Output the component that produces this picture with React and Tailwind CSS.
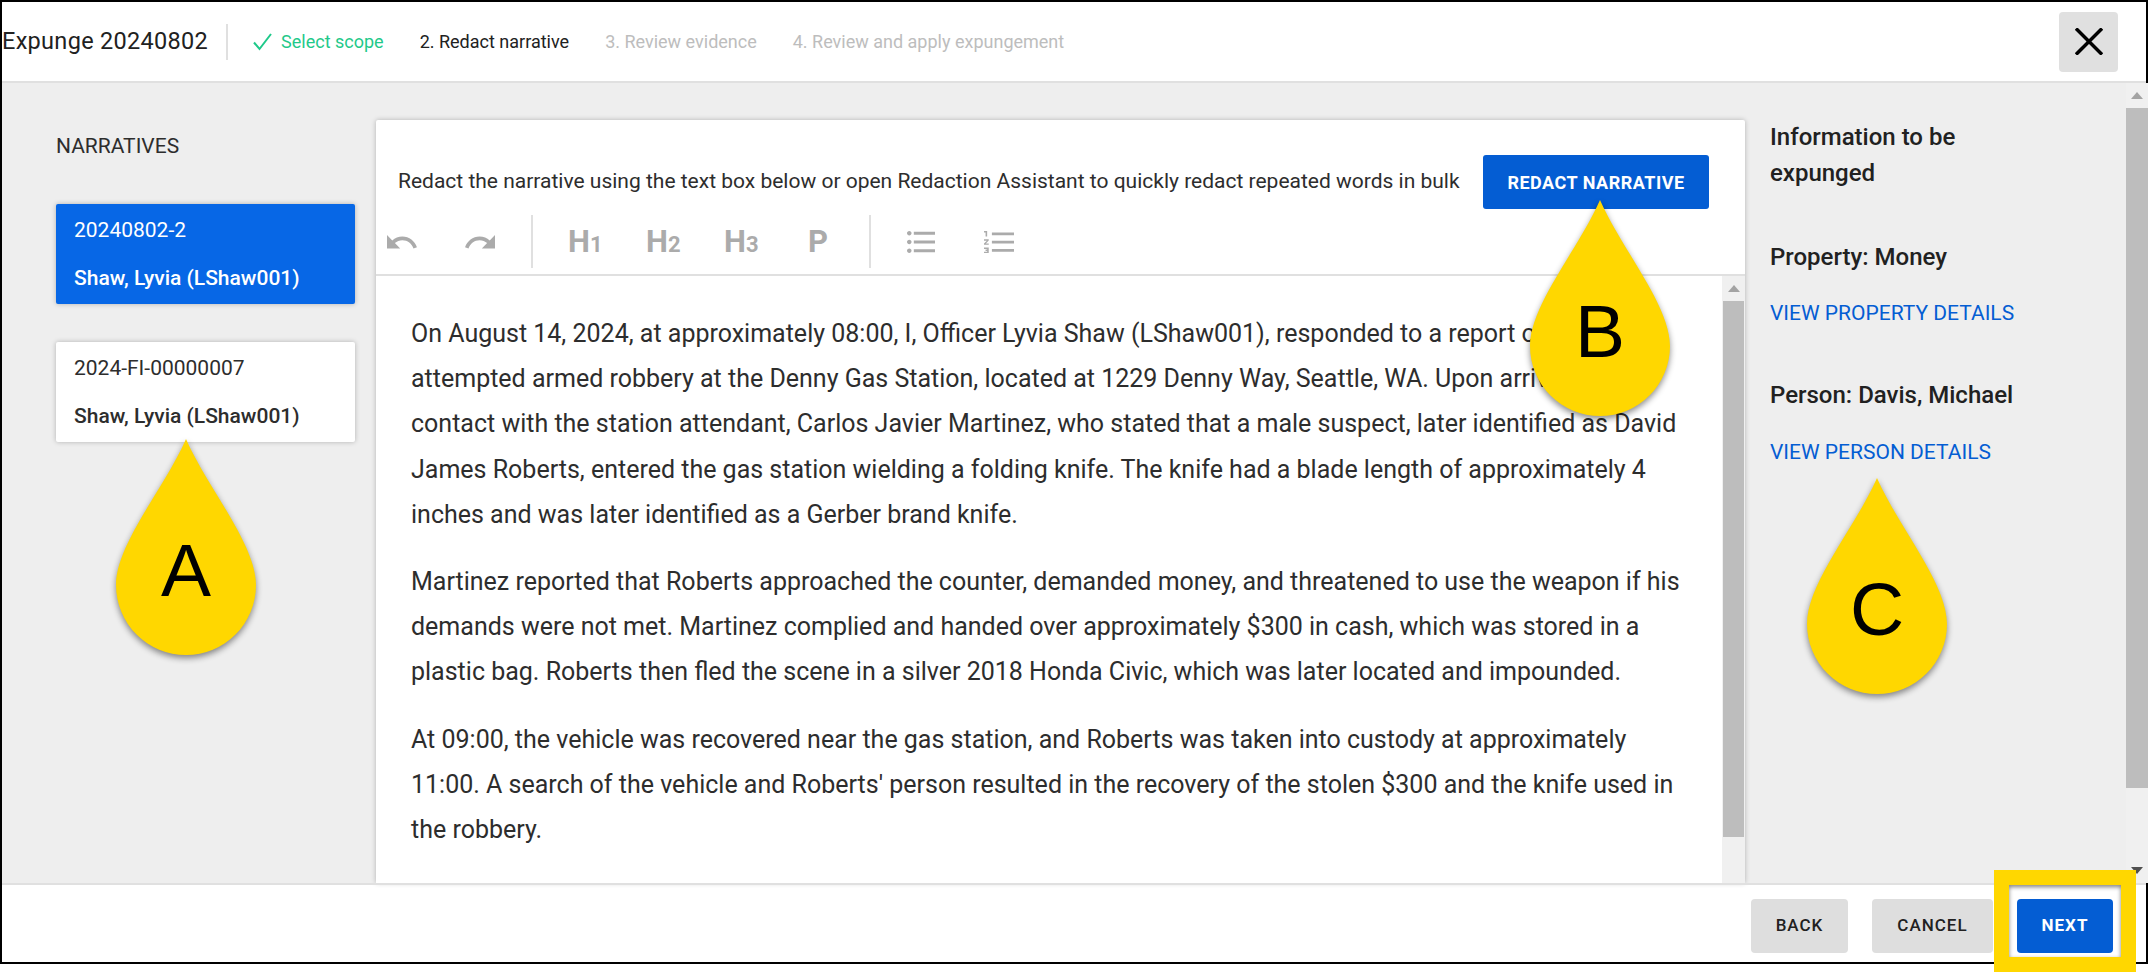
const narrative = [
  'On August 14, 2024, at approximately 08:00, I, Officer Lyvia Shaw (LShaw001), responded to a report of an attempted armed robbery at the Denny Gas Station, located at 1229 Denny Way, Seattle, WA. Upon arrival, I made contact with the station attendant, Carlos Javier Martinez, who stated that a male suspect, later identified as David James Roberts, entered the gas station wielding a folding knife. The knife had a blade length of approximately 4 inches and was later identified as a Gerber brand knife.',
  'Martinez reported that Roberts approached the counter, demanded money, and threatened to use the weapon if his demands were not met. Martinez complied and handed over approximately $300 in cash, which was stored in a plastic bag. Roberts then fled the scene in a silver 2018 Honda Civic, which was later located and impounded.',
  "At 09:00, the vehicle was recovered near the gas station, and Roberts was taken into custody at approximately 11:00. A search of the vehicle and Roberts' person resulted in the recovery of the stolen $300 and the knife used in the robbery.",
];

function Pin({ letter, className }) {
  return (
    <div className={`absolute w-[140px] h-[216px] drop-shadow-[0_3px_3px_rgba(0,0,0,0.45)] ${className}`}>
      <svg viewBox="0 0 140 216" className="w-full h-full">
        <path d="M70 0C92 50 140 105 140 146A70 70 0 0 1 0 146C0 105 48 50 70 0Z" fill="#ffd700" />
      </svg>
      <span className="absolute left-0 right-0 top-[93px] text-center text-[75px] leading-[76px] text-black font-['Liberation_Sans']">{letter}</span>
    </div>
  );
}

function UndoIcon({ flip }) {
  return (
    <svg viewBox="2 7 20.5 9.3" preserveAspectRatio="none" className={`w-[30px] h-[14px] ${flip ? '-scale-x-100' : ''}`} fill="#ababab">
      <path d="M12.5 8c-2.65 0-5.05.99-6.9 2.6L2 7v9h9l-3.62-3.62c1.39-1.16 3.16-1.88 5.12-1.88 3.54 0 6.55 2.31 7.6 5.5l2.37-.78C21.08 11.03 17.15 8 12.5 8z" />
    </svg>
  );
}

function Heading({ n }) {
  return (
    <span className="font-bold text-[#ababab] text-[31px] leading-none w-[78px] shrink-0">
      H<span className="text-[22px]">{n}</span>
    </span>
  );
}

function BulletIcon() {
  return (
    <svg viewBox="2.5 4.5 18.5 15" preserveAspectRatio="none" className="w-[28px] h-[22px]" fill="#ababab">
      <path d="M4 10.5c-.83 0-1.5.67-1.5 1.5s.67 1.5 1.5 1.5 1.5-.67 1.5-1.5-.67-1.5-1.5-1.5zm0-6c-.83 0-1.5.67-1.5 1.5S3.17 7.5 4 7.5 5.5 6.83 5.5 6 4.83 4.5 4 4.5zm0 12c-.83 0-1.5.68-1.5 1.5s.68 1.5 1.5 1.5 1.5-.68 1.5-1.5-.67-1.5-1.5-1.5zM7 19h14v-2H7v2zm0-6h14v-2H7v2zm0-8v2h14V5H7z" />
    </svg>
  );
}

function NumberIcon() {
  return (
    <svg viewBox="2 4 19 16" preserveAspectRatio="none" className="w-[30px] h-[22px]" fill="#ababab">
      <path d="M2 17h2v.5H3v1h1v.5H2v1h3v-4H2zm1-9h1V4H2v1h1v3zm-1 3h1.8L2 13.1v.9h3v-1H3.2L5 10.9V10H2v1zm5-6v2h14V5H7zm0 14h14v-2H7v2zm0-6h14v-2H7v2z" />
    </svg>
  );
}

function Scrollbar({ thumbClass, trackClass, children }) {
  return (
    <div className={`flex flex-col shrink-0 ${trackClass}`}>
      <div className="h-[25px] flex items-center justify-center shrink-0">
        <div className="w-0 h-0 border-x-[6px] border-x-transparent border-b-[7px] border-b-[#a3a3a3]"></div>
      </div>
      <div className={`w-full bg-[#bdbdbd] shrink-0 ${thumbClass}`}></div>
      {children}
    </div>
  );
}

export default function App() {
  return (
    <div className="relative w-[2148px] h-[972px] overflow-hidden bg-white font-['Roboto',sans-serif] text-[#212121]">
      <div className="flex flex-col h-[964px] border-2 border-black bg-white">
        {/* header */}
        <div className="flex items-center h-[81px] shrink-0 border-b-2 border-[#e0e0e0] pr-[28px]">
          <span className="text-[23.5px] leading-none tracking-[0.3px] whitespace-nowrap">Expunge 20240802</span>
          <div className="w-[2px] h-9 bg-[#e0e0e0] ml-[18px] mr-[25px]"></div>
          <svg viewBox="0 0 19 19" className="w-[19px] h-[19px] mr-[9px]" fill="none" stroke="#1fc98a" strokeWidth="2">
            <path d="M1 10.5 6.5 17 18 2" />
          </svg>
          <span className="text-[18px] text-[#1fc98a]">Select scope</span>
          <span className="text-[18px] ml-9">2. Redact narrative</span>
          <span className="text-[18px] ml-9 text-[#bdbdbd]">3. Review evidence</span>
          <span className="text-[18px] ml-9 text-[#bdbdbd]">4. Review and apply expungement</span>
          <button className="ml-auto w-[59px] h-[60px] rounded bg-[#e0e0e0] flex items-center justify-center">
            <svg viewBox="0 0 28 27" className="w-[28px] h-[27px]" fill="none" stroke="#000" strokeWidth="3.5">
              <path d="M1 0.5 27 26.5M27 0.5 1 26.5" />
            </svg>
          </button>
        </div>

        {/* body */}
        <div className="flex flex-1 min-h-0 bg-[#eeeeee] -mr-[2px]">
          <aside className="w-[374px] shrink-0 pl-[54px] pt-[49px] text-[#2d2d2d]">
            <div className="text-[21px] leading-[28px]">NARRATIVES</div>
            <div className="mt-[44px] w-[299px] h-[100px] pt-[2px] rounded-[2px] bg-[#0767e6] text-white shadow-[0_0_5px_rgba(0,0,0,0.25)] px-[18px]">
              <div className="text-[21px] leading-[48px]">20240802-2</div>
              <div className="text-[21px] font-medium leading-[48px]">Shaw, Lyvia (LShaw001)</div>
            </div>
            <div className="mt-[38px] w-[299px] h-[100px] pt-[2px] rounded-[2px] bg-white shadow-[0_0_5px_rgba(0,0,0,0.25)] px-[18px]">
              <div className="text-[21px] leading-[48px]">2024-FI-00000007</div>
              <div className="text-[21px] font-medium leading-[48px]">Shaw, Lyvia (LShaw001)</div>
            </div>
          </aside>

          <main className="w-[1369px] shrink-0 mt-[37px] flex flex-col bg-white shadow-[0_0_5px_rgba(0,0,0,0.25)] rounded-t-[2px]">
            <div className="flex items-center h-[89px] shrink-0 pl-[22px] pr-[36px] pt-[35px]">
              <span className="text-[21px] text-[#2d2d2d] whitespace-nowrap">Redact the narrative using the text box below or open Redaction Assistant to quickly redact repeated words in bulk</span>
              <button className="ml-auto w-[226px] h-[54px] rounded-[3px] bg-[#045dd3] text-white text-[18px] font-bold tracking-[0.5px]">REDACT NARRATIVE</button>
            </div>
            <div className="flex items-center h-[67px] shrink-0 border-b-2 border-[#e0e0e0]">
              <div className="flex items-center gap-[48px] pl-[11px] w-[155px]"><UndoIcon /><UndoIcon flip /></div>
              <div className="w-[2px] h-[53px] bg-[#e0e0e0]"></div>
              <div className="flex items-center pl-[35px] w-[336px]">
                <Heading n="1" /><Heading n="2" /><Heading n="3" />
                <span className="font-bold text-[#ababab] text-[31px] leading-none ml-[6px]">P</span>
              </div>
              <div className="w-[2px] h-[53px] bg-[#e0e0e0]"></div>
              <div className="flex items-center gap-[49px] pl-[36px]"><BulletIcon /><NumberIcon /></div>
            </div>
            <div className="flex flex-1 min-h-0">
              <div className="flex-1 overflow-hidden pl-[35px] pr-[32px] pt-[35px] text-[25px] leading-[45.2px] text-[#2d2d2d]">
                {narrative.map((p) => (
                  <p key={p.slice(0, 12)} className="mb-[22px]">{p}</p>
                ))}
              </div>
              <Scrollbar trackClass="w-[23px] bg-[#f0f0f0] px-[1px]" thumbClass="h-[536px]" />
            </div>
          </main>

          <aside className="flex-1 min-w-0 flex">
            <div className="flex-1 pl-[25px] pt-[36px]">
              <div className="text-[24px] font-medium leading-[36px] w-[230px]">Information to be expunged</div>
              <div className="text-[24px] font-medium leading-[36px] mt-[48px]">Property: Money</div>
              <div className="text-[21px] leading-[30px] text-[#045dd3] mt-[23px]">VIEW PROPERTY DETAILS</div>
              <div className="text-[24px] font-medium leading-[36px] mt-[49px]">Person: Davis, Michael</div>
              <div className="text-[21px] leading-[30px] text-[#045dd3] mt-[24px]">VIEW PERSON DETAILS</div>
            </div>
            <Scrollbar trackClass="w-[22px] bg-[#f0f0f0]" thumbClass="h-[680px]">
              <div className="mt-auto h-[25px] flex items-center justify-center shrink-0">
                <div className="w-0 h-0 border-x-[6px] border-x-transparent border-t-[7px] border-t-[#505050]"></div>
              </div>
            </Scrollbar>
          </aside>
        </div>

        {/* footer */}
        <div className="flex items-start justify-end gap-6 h-[79px] shrink-0 border-t-2 border-[#e0e0e0] pt-[14px] pr-[33px]">
          <button className="w-[97px] h-[54px] rounded bg-[#dedede] text-[17px] font-medium tracking-[1px]">BACK</button>
          <button className="w-[121px] h-[54px] rounded bg-[#dedede] text-[17px] font-medium tracking-[1px]">CANCEL</button>
          <button className="w-[96px] h-[54px] rounded bg-[#045dd3] text-white text-[17px] font-bold tracking-[1px]">NEXT</button>
        </div>
      </div>

      {/* callouts */}
      <Pin letter="A" className="left-[116px] top-[439px]" />
      <Pin letter="B" className="left-[1530px] top-[200px]" />
      <Pin letter="C" className="left-[1807px] top-[478px]" />
      <div className="absolute left-[1994px] top-[870px] w-[142px] h-[102px] border-[15px] border-[#ffd700] shadow-[inset_0_2px_4px_rgba(0,0,0,0.5)]"></div>
    </div>
  );
}
